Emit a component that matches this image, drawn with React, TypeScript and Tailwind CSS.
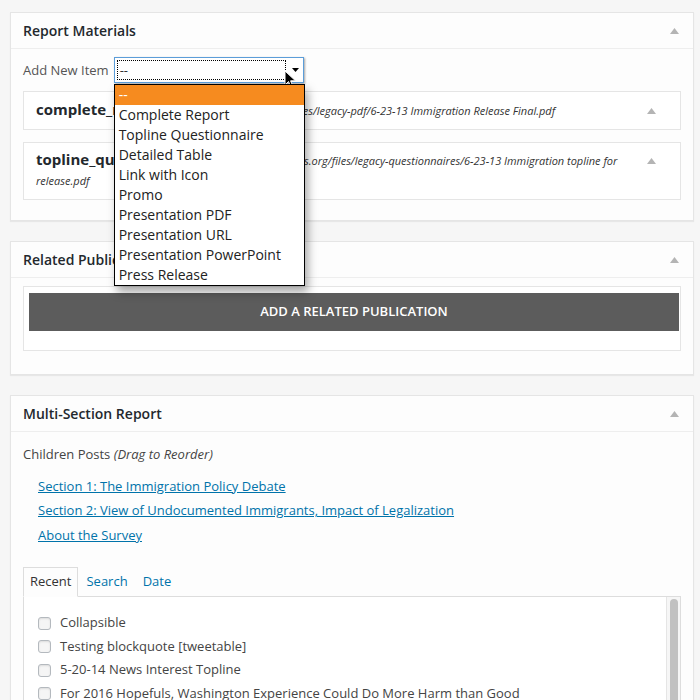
import React from "react"

const options = [
  "--",
  "Complete Report",
  "Topline Questionnaire",
  "Detailed Table",
  "Link with Icon",
  "Promo",
  "Presentation PDF",
  "Presentation URL",
  "Presentation PowerPoint",
  "Press Release",
]

const recent = [
  "Collapsible",
  "Testing blockquote [tweetable]",
  "5-20-14 News Interest Topline",
  "For 2016 Hopefuls, Washington Experience Could Do More Harm than Good",
]

function Caret({ className = "" }: { className?: string }) {
  return (
    <svg width="9" height="6" viewBox="0 0 9 6" className={className}>
      <path d="M0 6 L4.5 0 L9 6 Z" fill="#b4b4b4" />
    </svg>
  )
}

function Panel({ title, children }: { title: string; children: React.ReactNode }) {
  return (
    <div className="border border-[#e5e5e5] bg-[#fdfdfd] shadow-[0_1px_1px_rgba(0,0,0,0.06)]">
      <div className="flex h-[36px] items-center justify-between border-b border-[#eeeeee] pl-[12px] pr-[14px]">
        <h2 className="text-[14px] font-semibold text-[#23282d]">{title}</h2>
        <Caret />
      </div>
      {children}
    </div>
  )
}

function Cursor() {
  return (
    <svg width="13" height="19" viewBox="0 0 13 19" className="absolute left-[170px] top-[13px]">
      <path d="M1 1 L1 15 L4.5 11.5 L7 17.5 L9 16.6 L6.6 10.8 L11.5 10.8 Z" fill="#000" stroke="#fff" strokeWidth="1" />
    </svg>
  )
}

function AddSelect() {
  return (
    <div className="relative ml-[5px] h-[26px] w-[190px]">
      <div className="flex h-full border border-[#5b9dd9] bg-white shadow-[1px_1px_2px_rgba(0,0,0,0.35)]">
        <div className="m-[2px] flex flex-1 items-center border border-dotted border-black px-[2px] text-[13px] leading-none text-[#333]">
          --
        </div>
        <div className="flex w-[15px] items-center justify-center">
          <svg width="7" height="4" viewBox="0 0 7 4">
            <path d="M0 0 L7 0 L3.5 4 Z" fill="#000" />
          </svg>
        </div>
      </div>
      <Cursor />
      <ul className="absolute left-0 top-[27px] z-10 w-[191px] border border-black bg-white shadow-[3px_6px_9px_rgba(0,0,0,0.35)]">
        {options.map((o, i) => (
          <li
            key={o}
            className={
              i === 0
                ? "h-[20px] bg-[#f68b1f] pl-[4px] text-[14px] leading-[20px] text-white"
                : "h-[20px] pl-[4px] text-[14px] leading-[20px] text-[#222]"
            }
          >
            {o}
          </li>
        ))}
      </ul>
    </div>
  )
}

export default function App() {
  return (
    <div className="min-h-[700px] bg-[#f6f6f6] px-[10px] pt-[12px] font-['Open_Sans',sans-serif] text-[#444]">
      <div className="w-[684px]">
        <Panel title="Report Materials">
          <div className="px-[12px] pb-[20px] pt-[8px]">
            <div className="flex items-center text-[13px] text-[#555]">
              <span className="pt-[2px]">Add New Item</span>
              <AddSelect />
            </div>

            <div className="mt-[8px] flex items-start justify-between border border-[#e5e5e5] bg-white pb-[8px] pl-[12px] pr-[24px] pt-[9px]">
              <p className="text-[11px] italic leading-[20px] text-[#333]">
                <span className="text-[15px] font-bold not-italic leading-[14px] text-[#23282d]">complete_report</span>{" "}
                <span className="-ml-[9px]">http://www.pewhispanic.org/files/legacy-pdf/6-23-13 Immigration Release Final.pdf</span>
              </p>
              <Caret className="mt-[7px] shrink-0" />
            </div>

            <div className="mt-[12px] flex items-start justify-between border border-[#e5e5e5] bg-white pb-[8px] pl-[12px] pr-[24px] pt-[8px]">
              <p className="text-[11px] italic leading-[20px] text-[#333]">
                <span className="text-[15px] font-bold not-italic leading-[14px] text-[#23282d]">topline_questionnaire</span>{" "}
                <span className="-ml-[13px]">
                  http://www.people-press.org/files/legacy-questionnaires/6-23-13 Immigration topline for release.pdf
                </span>
              </p>
              <Caret className="ml-[24px] mt-[7px] shrink-0" />
            </div>
          </div>
        </Panel>

        <div className="mt-[20px]">
          <Panel title="Related Publications">
            <div className="px-[12px] pb-[23px] pt-[8px]">
              <div className="border border-[#e5e5e5] bg-white pb-[19px] pl-[5px] pr-[1px] pt-[6px]">
                <button className="h-[38px] w-full bg-[#5c5c5c] text-[13px] font-semibold uppercase text-white">
                  Add a Related Publication
                </button>
              </div>
            </div>
          </Panel>
        </div>

        <div className="mt-[20px]">
          <Panel title="Multi-Section Report">
            <div className="px-[12px] pt-[13px]">
              <p className="text-[13px] text-[#444]">
                Children Posts <em>(Drag to Reorder)</em>
              </p>
              <ul className="mt-[11px] flex flex-col gap-[4.5px] pl-[15px] text-[13px] leading-[20px]">
                <li>
                  <a href="#" className="text-[#0073aa] underline">Section 1: The Immigration Policy Debate</a>
                </li>
                <li>
                  <a href="#" className="text-[#0073aa] underline">
                    Section 2: View of Undocumented Immigrants, Impact of Legalization
                  </a>
                </li>
                <li>
                  <a href="#" className="text-[#0073aa] underline">About the Survey</a>
                </li>
              </ul>

              <div className="mt-[22px] flex text-[13px]">
                <span className="-mb-px border border-b-[#fdfdfd] border-[#dddddd] bg-[#fdfdfd] px-[6px] py-[4px] text-[#333]">
                  Recent
                </span>
                <span className="px-[8px] py-[5px] text-[#0073aa]">Search</span>
                <span className="px-[7px] py-[5px] text-[#0073aa]">Date</span>
              </div>
              <div className="flex h-[110px] border border-[#dddddd] bg-white">
                <ul className="flex flex-1 flex-col gap-[3.5px] pl-[14px] pt-[16px] text-[13px] text-[#444]">
                  {recent.map((r) => (
                    <li key={r} className="flex h-[20px] items-center gap-[9px]">
                      <span className="h-[13px] w-[13px] rounded-[3px] border border-[#b4b9be] bg-[#f5f5f5] shadow-[inset_0_1px_2px_rgba(0,0,0,0.1)]" />
                      {r}
                    </li>
                  ))}
                </ul>
                <div className="w-[14px] border-l border-[#e5e5e5] bg-[#f6f6f6] pt-[2px]">
                  <div className="mx-auto h-full w-[8px] rounded-t-[4px] bg-[#c1c1c1]" />
                </div>
              </div>
            </div>
          </Panel>
        </div>
      </div>
    </div>
  )
}
